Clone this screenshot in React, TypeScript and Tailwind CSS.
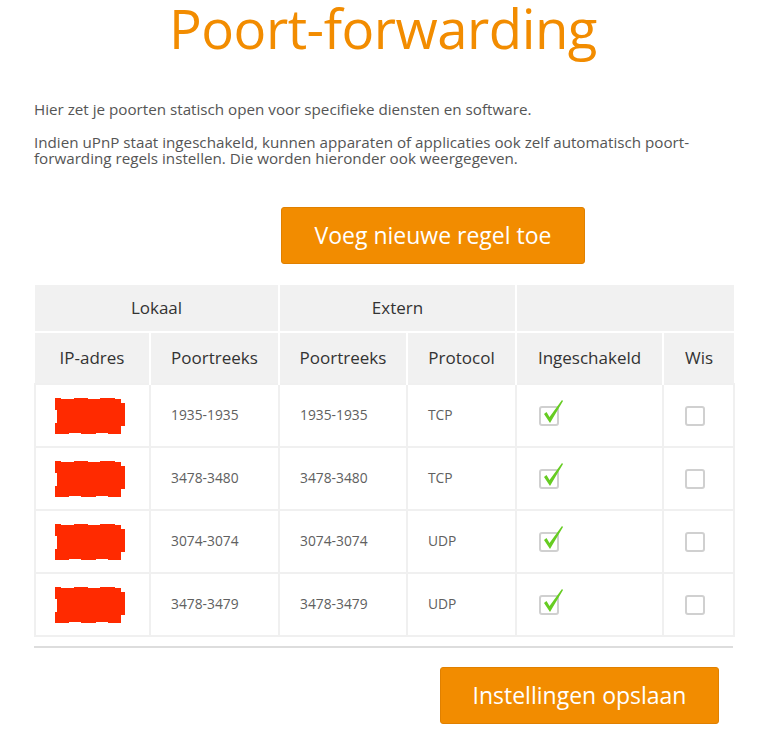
import React from "react";

type Rule = {
  local: string;
  external: string;
  protocol: string;
};

const rules: Rule[] = [
  { local: "1935-1935", external: "1935-1935", protocol: "TCP" },
  { local: "3478-3480", external: "3478-3480", protocol: "TCP" },
  { local: "3074-3074", external: "3074-3074", protocol: "UDP" },
  { local: "3478-3479", external: "3478-3479", protocol: "UDP" },
];

function Redacted() {
  return (
    <svg width="70" height="36" viewBox="0 0 70 36" className="block">
      <polygon
        fill="#ff2a00"
        points="0,0 6,0 6,1 19,1 19,0 33,0 33,1 45,1 45,0 60,0 60,1 66,1 66,5 70,5 70,28 66,28 66,36 53,36 53,35 41,35 41,36 26,36 26,35 14,35 14,36 0,36 0,25 2,25 2,12 0,12"
      />
    </svg>
  );
}

function CheckedBox() {
  return (
    <div className="relative h-[20px] w-[20px]">
      <div className="h-[20px] w-[20px] rounded-[3px] border-2 border-[#d0d0d0] bg-white" />
      <svg
        width="26"
        height="26"
        viewBox="0 0 26 26"
        className="absolute left-[2px] top-[-7px]"
      >
        <path d="M3 15 L5.5 13 L8.5 18 L21 1 L22 2 L9 24 Z" fill="#66cc22" />
      </svg>
    </div>
  );
}

function EmptyBox() {
  return (
    <div className="h-[20px] w-[20px] rounded-[3px] border-2 border-[#d0d0d0] bg-white" />
  );
}

export default function App() {
  return (
    <main
      className="min-h-screen w-[778px] bg-white text-[#555]"
      style={{ fontFamily: '"Open Sans", "Liberation Sans", sans-serif' }}
    >
      <div className="px-[34px]">
        <h1 className="pr-[12px] text-center text-[54.5px] leading-[56px] font-normal tracking-[-0.5px] text-[#f28c00]">
          Poort-forwarding
        </h1>

        <div className="mt-[45px] space-y-[17px] text-[15.2px] leading-[16px] text-[#555]">
          <p>Hier zet je poorten statisch open voor specifieke diensten en software.</p>
          <p>
            Indien uPnP staat ingeschakeld, kunnen apparaten of applicaties ook zelf automatisch poort-
            <br />
            forwarding regels instellen. Die worden hieronder ook weergegeven.
          </p>
        </div>

        <div className="mt-[41px] flex">
          <button className="ml-[247px] h-[57px] w-[304px] rounded-[3px] border border-[#e08000] bg-[#f28c00] text-[23px] text-white">
            Voeg nieuwe regel toe
          </button>
        </div>

        <table className="mt-[21px] w-[699px] table-fixed border-collapse">
          <colgroup>
            <col className="w-[115px]" />
            <col className="w-[129px]" />
            <col className="w-[128px]" />
            <col className="w-[109px]" />
            <col className="w-[147px]" />
            <col className="w-[71px]" />
          </colgroup>
          <thead>
            <tr className="h-[47px] bg-[#f1f1f1] text-[17px] text-[#333]">
              <th colSpan={2} className="border-r-2 border-white font-normal">
                Lokaal
              </th>
              <th colSpan={2} className="border-r-2 border-white font-normal">
                Extern
              </th>
              <th colSpan={2} className="font-normal" />
            </tr>
            <tr className="h-[52px] bg-[#f1f1f1] text-[17px] text-[#333]">
              <th className="border-t-2 border-r-2 border-white font-normal">IP-adres</th>
              <th className="border-t-2 border-r-2 border-white font-normal">Poortreeks</th>
              <th className="border-t-2 border-r-2 border-white font-normal">Poortreeks</th>
              <th className="border-t-2 border-r-2 border-white font-normal">Protocol</th>
              <th className="border-t-2 border-r-2 border-white font-normal">Ingeschakeld</th>
              <th className="border-t-2 border-white font-normal">Wis</th>
            </tr>
          </thead>
          <tbody className="text-[13.8px] text-[#606060]">
            {rules.map((r, i) => (
              <tr key={i} className="h-[63px]">
                <td className="border-2 border-[#f0f0f0] pl-[19px]">
                  <Redacted />
                </td>
                <td className="border-2 border-[#f0f0f0] pl-[20px]">{r.local}</td>
                <td className="border-2 border-[#f0f0f0] pl-[20px]">{r.external}</td>
                <td className="border-2 border-[#f0f0f0] pl-[20px]">{r.protocol}</td>
                <td className="border-2 border-[#f0f0f0] pl-[22px]">
                  <CheckedBox />
                </td>
                <td className="border-2 border-[#f0f0f0] pl-[21px]">
                  <EmptyBox />
                </td>
              </tr>
            ))}
          </tbody>
        </table>

        <div className="mt-[9px] h-[2px] w-[699px] bg-[#dddddd]" />

        <div className="mt-[19px] flex justify-end pr-[25px]">
          <button className="h-[57px] w-[279px] rounded-[3px] border border-[#e08000] bg-[#f28c00] text-[23px] text-white">
            Instellingen opslaan
          </button>
        </div>
      </div>
    </main>
  );
}
